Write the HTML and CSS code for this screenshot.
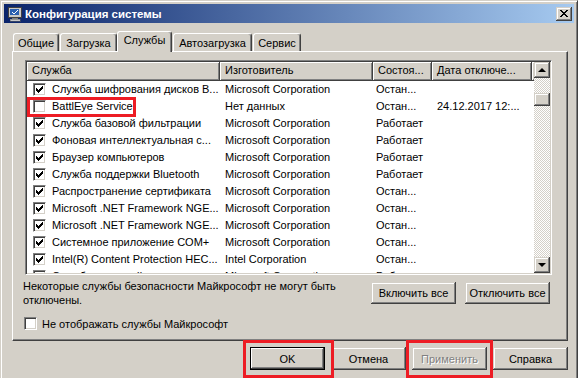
FILE: index.html
```html
<!DOCTYPE html>
<html lang="ru">
<head>
<meta charset="utf-8">
<title>Конфигурация системы</title>
<link rel="stylesheet" href="styles.css">
</head>
<body>
<div class="window">
  <div class="titlebar">
    <svg class="app-icon" width="16" height="16" viewBox="0 0 16 16" shape-rendering="crispEdges">
      <rect x="1" y="1" width="13" height="10" fill="#c8c8c8" stroke="#404040" stroke-width="1"/>
      <rect x="3" y="3" width="9" height="6" fill="#2a5fb0"/>
      <path d="M5 6 L7 8 L11 4" stroke="#ffffff" stroke-width="1" fill="none"/>
      <rect x="5" y="12" width="6" height="1" fill="#808080"/>
      <rect x="3" y="13" width="10" height="2" fill="#c8c8c8" stroke="#606060" stroke-width="0.5"/>
    </svg>
    <span class="title">Конфигурация системы</span>
    <div class="close raised">
      <svg width="8" height="7" viewBox="0 0 8 7" shape-rendering="crispEdges">
        <path d="M0 0h2v1h-2zM6 0h2v1h-2zM1 1h2v1h-2zM5 1h2v1h-2zM2 2h4v1h-4zM3 3h2v1h-2zM2 4h4v1h-4zM1 5h2v1h-2zM5 5h2v1h-2zM0 6h2v1h-2zM6 6h2v1h-2z" fill="#000"/>
      </svg>
    </div>
  </div>

  <div class="content">
    <div class="tabs">
      <div class="tab t1">Общие</div>
      <div class="tab t2">Загрузка</div>
      <div class="tab t3 active">Службы</div>
      <div class="tab t4">Автозагрузка</div>
      <div class="tab t5">Сервис</div>
    </div>

    <div class="panel">
      <div class="list">
        <div class="list-main">
          <div class="header">
            <div class="hcell c1">Служба</div>
            <div class="hcell c2">Изготовитель</div>
            <div class="hcell c3">Состоя...</div>
            <div class="hcell c4">Дата отключе...</div>
            <div class="hcell cfill"></div>
          </div>
          <div class="rows">
            <div class="row"><div class="cell c1"><span class="cb checked"></span>Служба шифрования дисков B...</div><div class="cell c2">Microsoft Corporation</div><div class="cell c3">Остан...</div><div class="cell c4"></div></div>
            <div class="row"><div class="cell c1"><span class="cb"></span>BattlEye Service</div><div class="cell c2">Нет данных</div><div class="cell c3">Остан...</div><div class="cell c4">24.12.2017 12:...</div></div>
            <div class="row"><div class="cell c1"><span class="cb checked"></span>Служба базовой фильтрации</div><div class="cell c2">Microsoft Corporation</div><div class="cell c3">Работает</div><div class="cell c4"></div></div>
            <div class="row"><div class="cell c1"><span class="cb checked"></span>Фоновая интеллектуальная с...</div><div class="cell c2">Microsoft Corporation</div><div class="cell c3">Работает</div><div class="cell c4"></div></div>
            <div class="row"><div class="cell c1"><span class="cb checked"></span>Браузер компьютеров</div><div class="cell c2">Microsoft Corporation</div><div class="cell c3">Работает</div><div class="cell c4"></div></div>
            <div class="row"><div class="cell c1"><span class="cb checked"></span>Служба поддержки Bluetooth</div><div class="cell c2">Microsoft Corporation</div><div class="cell c3">Работает</div><div class="cell c4"></div></div>
            <div class="row"><div class="cell c1"><span class="cb checked"></span>Распространение сертификата</div><div class="cell c2">Microsoft Corporation</div><div class="cell c3">Остан...</div><div class="cell c4"></div></div>
            <div class="row"><div class="cell c1"><span class="cb checked"></span>Microsoft .NET Framework NGE...</div><div class="cell c2">Microsoft Corporation</div><div class="cell c3">Остан...</div><div class="cell c4"></div></div>
            <div class="row"><div class="cell c1"><span class="cb checked"></span>Microsoft .NET Framework NGE...</div><div class="cell c2">Microsoft Corporation</div><div class="cell c3">Остан...</div><div class="cell c4"></div></div>
            <div class="row"><div class="cell c1"><span class="cb checked"></span>Системное приложение COM+</div><div class="cell c2">Microsoft Corporation</div><div class="cell c3">Остан...</div><div class="cell c4"></div></div>
            <div class="row"><div class="cell c1"><span class="cb checked"></span>Intel(R) Content Protection HEC...</div><div class="cell c2">Intel Corporation</div><div class="cell c3">Остан...</div><div class="cell c4"></div></div>
            <div class="row"><div class="cell c1"><span class="cb checked"></span>Служба сведений о подключенных...</div><div class="cell c2">Microsoft Corporation</div><div class="cell c3">Работает</div><div class="cell c4"></div></div>
          </div>
        </div>
        <div class="scrollbar">
          <div class="sbtn raised"><span class="arrow-up"></span></div>
          <div class="track"><div class="thumb raised"></div></div>
          <div class="sbtn raised"><span class="arrow-down"></span></div>
        </div>
      </div>

      <div class="bottom">
        <p class="note">Некоторые службы безопасности Майкрософт не могут быть<br>отключены.</p>
        <div class="bulk">
          <div class="btn raised">Включить все</div>
          <div class="btn raised">Отключить все</div>
        </div>
      </div>

      <div class="hide-ms"><span class="cb"></span>Не отображать службы Майкрософт</div>
    </div>

    <div class="dlg">
      <div class="btn dbtn default">OK</div>
      <div class="btn dbtn raised">Отмена</div>
      <div class="btn dbtn raised disabled">Применить</div>
      <div class="btn dbtn raised">Справка</div>
    </div>
  </div>

  <div class="mark mark-row"></div>
  <div class="mark mark-ok"></div>
  <div class="mark mark-apply"></div>
</div>
</body>
</html>
```
FILE: styles.css
```css
* { box-sizing: border-box; }
html, body { margin: 0; padding: 0; }
body {
  width: 578px;
  height: 378px;
  overflow: hidden;
  background: #d4d0c8;
  font-family: "Liberation Sans", Arial, sans-serif;
  font-size: 11px;
  color: #000;
}

.raised {
  background: #d4d0c8;
  box-shadow: inset -1px -1px #404040, inset 1px 1px #d4d0c8, inset -2px -2px #808080, inset 2px 2px #ffffff;
}

.window {
  position: relative;
  width: 578px;
  height: 378px;
  background: #d4d0c8;
  border-left: 1px solid #d4d0c8;
  border-top: 1px solid #d4d0c8;
  border-right: 1px solid #404040;
  box-shadow: inset 1px 1px #ffffff, inset -1px 0 #808080;
  padding: 3px 3px 0 3px;
}

.titlebar {
  height: 19px;
  display: flex;
  align-items: center;
  background: linear-gradient(to right, #0a246a, #a6caf0);
  color: #fff;
  font-weight: bold;
  font-size: 11.5px;
  padding: 0 2px 0 3px;
}
.app-icon { flex: none; }
.title { flex: 1; margin-left: 2px; }
.close {
  width: 16px;
  height: 14px;
  display: flex;
  align-items: center;
  justify-content: center;
  padding-bottom: 1px;
}

.content { padding: 8px 6px 0 8px; }

.tabs {
  display: flex;
  align-items: flex-end;
  height: 20px;
  margin-left: 1px;
  position: relative;
  z-index: 1;
}
.tab {
  height: 18px;
  line-height: 16px;
  padding-top: 1px;
  text-align: center;
  background: #d4d0c8;
  border-left: 1px solid #fff;
  border-top: 1px solid #fff;
  border-right: 1px solid #404040;
  box-shadow: inset -1px 0 #808080;
  border-radius: 3px 3px 0 0;
  white-space: nowrap;
}
.tab.active { height: 21px; margin-bottom: -1px; line-height: 17px; padding-top: 0; }
.t1 { width: 46px; }
.t2 { width: 57px; margin-left: 1px; }
.t3 { width: 55px; }
.t4 { width: 79px; margin-left: 1px; }
.t5 { width: 48px; margin-left: 1px; }

.panel {
  height: 290px;
  border-top: 1px solid #fff;
  border-left: 1px solid #fff;
  border-right: 1px solid #404040;
  border-bottom: 1px solid #404040;
  box-shadow: inset -1px -1px #808080;
  padding-top: 8px;
}

.list {
  margin-left: 12px;
  width: 527px;
  height: 215px;
  border: 1px solid;
  border-color: #808080 #ffffff #ffffff #808080;
  box-shadow: inset 1px 1px #404040, inset -1px -1px #d4d0c8;
  padding: 1px;
  display: flex;
}
.list-main {
  width: 507px;
  background: #fff;
  overflow: hidden;
}
.header { display: flex; height: 19px; }
.hcell {
  height: 19px;
  line-height: 17px;
  padding-left: 5px;
  background: #d4d0c8;
  box-shadow: inset 1px 1px #fff, inset -1px -1px #808080;
  border-right: 1px solid #404040;
  border-bottom: 1px solid #404040;
  white-space: nowrap;
  overflow: hidden;
}
.hcell.cfill { border-right: none; box-shadow: inset 1px 1px #fff, inset 0 -1px #808080; }
.c1 { width: 193px; flex: none; }
.c2 { width: 153px; flex: none; }
.c3 { width: 59px; flex: none; }
.c4 { width: 100px; flex: none; }
.cfill { flex: 1; }

.row { display: flex; height: 17px; line-height: 17px; white-space: nowrap; }
.cell { overflow: hidden; }
.cell.c1 { display: flex; align-items: center; padding-left: 6px; }
.cell.c2 { padding-left: 5px; }
.cell.c3 { padding-left: 3px; }
.cell.c4 { padding-left: 5px; }

.cb {
  flex: none;
  display: inline-block;
  width: 13px;
  height: 13px;
  background: #fff;
  border: 1px solid;
  border-color: #808080 #ffffff #ffffff #808080;
  box-shadow: inset 1px 1px #404040, inset -1px -1px #d4d0c8;
  margin-right: 6px;
}
.cb.checked {
  background: #fff url("data:image/svg+xml;utf8,<svg xmlns='http://www.w3.org/2000/svg' width='11' height='11' shape-rendering='crispEdges'><path d='M8 2h1v3h-1zM7 3h1v3h-1zM6 4h1v3h-1zM5 5h1v3h-1zM4 6h1v3h-1zM3 5h1v3h-1zM2 4h1v3h-1z' fill='black'/></svg>") no-repeat 0 0;
}

.scrollbar {
  width: 16px;
  display: flex;
  flex-direction: column;
}
.sbtn {
  width: 16px;
  height: 16px;
  flex: none;
  display: flex;
  align-items: center;
  justify-content: center;
}
.arrow-up {
  width: 0; height: 0;
  border-left: 4px solid transparent;
  border-right: 4px solid transparent;
  border-bottom: 4px solid #000;
  margin-bottom: 1px;
}
.arrow-down {
  width: 0; height: 0;
  border-left: 4px solid transparent;
  border-right: 4px solid transparent;
  border-top: 4px solid #000;
}
.track {
  flex: 1;
  background: repeating-conic-gradient(#ffffff 0% 25%, #d4d0c8 0% 50%) 0 0 / 2px 2px;
}
.thumb { width: 16px; height: 13px; margin-top: 15px; }

.bottom { display: flex; margin: 4px 0 0 10px; }
.note { margin: 0; width: 348px; line-height: 14px; }
.bulk { display: flex; gap: 9px; margin-top: 3px; }
.btn {
  height: 22px;
  display: flex;
  align-items: center;
  justify-content: center;
  white-space: nowrap;
}
.bulk .btn { width: 85px; }

.hide-ms {
  display: flex;
  align-items: center;
  margin: 10px 0 0 11px;
}
.hide-ms .cb { margin-right: 5px; }

.dlg {
  display: flex;
  justify-content: flex-end;
  gap: 6px;
  margin-top: 6px;
}
.dbtn { width: 75px; height: 23px; }
.default {
  background: #d4d0c8;
  border: 1px solid #000;
  box-shadow: inset -1px -1px #404040, inset 1px 1px #fff, inset -2px -2px #808080;
}
.disabled { color: #808080; text-shadow: 1px 1px #fff; }

.mark { position: absolute; border: 3px solid #ed1c24; }
.mark-row { left: 26px; top: 96px; width: 109px; height: 20px; }
.mark-ok { left: 242px; top: 339px; width: 91px; height: 38px; }
.mark-apply { left: 405px; top: 339px; width: 87px; height: 38px; }
```
